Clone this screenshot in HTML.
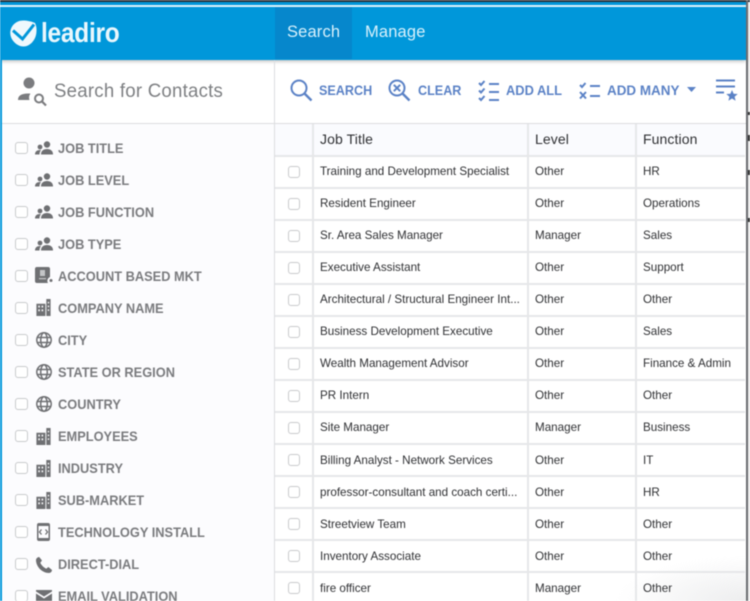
<!DOCTYPE html>
<html><head><meta charset="utf-8">
<style>
html,body{margin:0;padding:0;width:750px;height:601px;overflow:hidden;background:#fff}
body{font-family:"Liberation Sans",sans-serif;position:relative}
#w{position:absolute;left:0;top:0;width:750px;height:601px;overflow:hidden;filter:blur(.4px)}
.a{position:absolute;white-space:nowrap}
.top{left:0;top:0;width:750px;height:2px;background:#2a3038}
.top2{left:0;top:2px;width:746px;height:3px;background:#0097da}
.top3{left:0;top:5px;width:746px;height:2px;background:#dff4fc}
.bar{left:0;top:7px;width:746px;height:53px;background:#0097da;box-shadow:0 1px 4px rgba(0,0,0,.3)}
.tab{left:275px;top:7px;width:77px;height:52px;background:#0687cc}
.nav{top:23px;font-size:16.5px;color:#d8f1fc;letter-spacing:.15px;line-height:19px}
.lb{left:0;top:7px;width:2px;height:594px;background:#0097da}
.rb{left:746px;top:0;width:1.500px;height:601px;background:#6a6c70}
.rw{left:747.500px;top:2px;width:3px;height:599px;background:#ececec}
.sp{left:747px;width:3px;background:#333}
.v{left:274px;top:60px;width:1px;height:541px;background:#dcdde0}
.h{left:2px;top:123px;width:744px;height:1px;background:#dcdde0}
.side{left:2px;top:124px;width:272px;height:477px;background:#fcfcfe}
.st{left:54px;top:80px;font-size:19.500px;color:#7d7f82;letter-spacing:.25px;line-height:23px;transform:scaleX(.955);transform-origin:0 0}
.f{left:58px;margin-top:-.5px;font-size:14px;font-weight:bold;color:#7a7b7e;line-height:16px;height:16px;transform:scaleX(.915);transform-origin:0 0}
.cb{width:10px;height:10px;border:1.500px solid #c9cacc;border-radius:3px;background:#fff}
.cb[style^="left:15px"]{width:10.500px;height:10.500px;margin-top:.5px}
.ic{position:absolute;fill:#6f7073}
.tb{top:82px;font-size:14px;font-weight:bold;color:#5b82c6;line-height:16px;transform-origin:0 0}
.hd{top:131px;font-size:14px;color:#2f3033;line-height:16px;letter-spacing:.1px}
.c{font-size:12px;color:#2f3033;line-height:14px;transform:scaleX(.97);transform-origin:0 0}
.rl{left:275px;width:470px;height:1.500px;background:#e6e7e9}
.cl{top:124px;width:1.500px;height:477px;background:#e6e7e9}
.band{left:275px;top:124px;width:470px;height:31px;background:#fafbfe}
svg{overflow:visible}
.fade{left:275px;top:500px;width:471px;height:101px;background:radial-gradient(ellipse 130px 45px at 100% 100%,rgba(215,216,218,.45),rgba(235,236,238,0))}
</style></head><body>
<svg width="0" height="0" style="position:absolute">
<symbol id="pp" viewBox="0 0 18 14"><circle cx="12" cy="3.500" r="3.200"/><path d="M6 13.500c0-3.800 2.500-5.500 6-5.500s6 1.700 6 5.500z"/><circle cx="5" cy="6" r="2.400"/><path d="M0 13.500c0-3 2-4.500 5-4.500.6 0 1 .1 1 .1-1 1-1.500 2.500-1.500 4.400z"/></symbol>
<symbol id="bd" viewBox="0 0 15 18"><path d="M0 5h9.500v13H0zM10.500 0H15v18h-4.500z"/><path fill="#fcfcfe" d="M2 7h1.600v2H2zM5.500 7h1.600v2H5.500zM2 11h1.600v2H2zM5.500 11h1.600v2H5.500zM12 3h1.500v1.600H12zM12 7h1.500v1.600H12zM12 11h1.500v1.600H12z"/></symbol>
<symbol id="gl" viewBox="0 0 16 16"><g fill="none" stroke="#6f7073" stroke-width="1.500"><circle cx="8" cy="8" r="7.200"/><ellipse cx="8" cy="8" rx="3.300" ry="7.200"/><path d="M1 5.500h14M1 10.500h14"/></g></symbol>
</svg>
<div id="w">
<div class="a top"></div>
<div class="a top2"></div>
<div class="a rw"></div>
<div class="a sp" style="top:112px;height:3px"></div>
<div class="a sp" style="top:135px;height:6px"></div>
<div class="a sp" style="top:170px;height:5px"></div>
<div class="a sp" style="top:218px;height:4px"></div>
<div class="a bar"></div>
<div class="a top3"></div>
<div class="a tab"></div>
<div class="a lb"></div>
<div class="a rb"></div>
<svg class="a" style="left:10px;top:20px" width="28" height="27" viewBox="0 0 28 27"><path fill="#eef8fd" d="M13 .5c4 0 9 1 12 2.500 1.500 3 1.800 6 1.400 9.500C25.800 20 20 26.500 13.500 26.500S.3 20 .3 13 6 .5 13 .5z"/><path fill="none" stroke="#0097da" stroke-width="3" d="M3 10.500l9.500 8.500L24 4.500"/></svg>
<div class="a" style="left:41px;top:17px;font-size:28px;font-weight:bold;color:#e9f7fd;line-height:32px;letter-spacing:-.3px;transform:scaleX(.875);transform-origin:0 0">leadiro</div>
<div class="a nav" style="left:287px">Search</div>
<div class="a nav" style="left:365px">Manage</div>
<div class="a side"></div>
<div class="a h"></div>
<div class="a v"></div>
<svg class="a" style="left:17px;top:77px" width="30" height="30" viewBox="0 0 30 30" fill="#7b7c7f"><circle cx="12" cy="6" r="5.500"/><path d="M1 23c0-4 3-6.500 10-6.500 1 0 2 .1 2.500.2-1.500 1.500-1.800 4-1 6.300z"/><circle cx="22" cy="21.500" r="4" fill="none" stroke="#7b7c7f" stroke-width="2"/><path d="M25 24.500l4 4" stroke="#7b7c7f" stroke-width="2.200"/></svg>
<div class="a st">Search for Contacts</div>

<div class="a cb" style="left:15px;top:141px"></div><svg class="ic" style="left:35px;top:141px" width="18" height="14"><use href="#pp"/></svg><div class="a f" style="top:140px">JOB TITLE</div>
<div class="a cb" style="left:15px;top:173px"></div><svg class="ic" style="left:35px;top:173px" width="18" height="14"><use href="#pp"/></svg><div class="a f" style="top:172px">JOB LEVEL</div>
<div class="a cb" style="left:15px;top:205px"></div><svg class="ic" style="left:35px;top:205px" width="18" height="14"><use href="#pp"/></svg><div class="a f" style="top:204px">JOB FUNCTION</div>
<div class="a cb" style="left:15px;top:237px"></div><svg class="ic" style="left:35px;top:237px" width="18" height="14"><use href="#pp"/></svg><div class="a f" style="top:236px">JOB TYPE</div>
<div class="a cb" style="left:15px;top:269px"></div><svg class="ic" style="left:35px;top:267px" width="18" height="17" viewBox="0 0 18 17"><path d="M2 0h11a2 2 0 0 1 2 2v8a4 4 0 0 0-2 6H2a2 2 0 0 1-2-2V2a2 2 0 0 1 2-2z"/><circle cx="16" cy="13.500" r="1.500"/><path fill="#c4c5c7" d="M5 3h5v6H5zM4 11h7v1.200H4z"/></svg><div class="a f" style="top:268px">ACCOUNT BASED MKT</div>
<div class="a cb" style="left:15px;top:301px"></div><svg class="ic" style="left:36px;top:299px" width="15" height="17"><use href="#bd"/></svg><div class="a f" style="top:300px">COMPANY NAME</div>
<div class="a cb" style="left:15px;top:333px"></div><svg class="ic" style="left:36px;top:332px" width="16" height="16"><use href="#gl"/></svg><div class="a f" style="top:332px">CITY</div>
<div class="a cb" style="left:15px;top:365px"></div><svg class="ic" style="left:36px;top:364px" width="16" height="16"><use href="#gl"/></svg><div class="a f" style="top:364px">STATE OR REGION</div>
<div class="a cb" style="left:15px;top:397px"></div><svg class="ic" style="left:36px;top:396px" width="16" height="16"><use href="#gl"/></svg><div class="a f" style="top:396px">COUNTRY</div>
<div class="a cb" style="left:15px;top:429px"></div><svg class="ic" style="left:36px;top:428px" width="15" height="17"><use href="#bd"/></svg><div class="a f" style="top:428px">EMPLOYEES</div>
<div class="a cb" style="left:15px;top:461px"></div><svg class="ic" style="left:36px;top:460px" width="15" height="17"><use href="#bd"/></svg><div class="a f" style="top:460px">INDUSTRY</div>
<div class="a cb" style="left:15px;top:493px"></div><svg class="ic" style="left:36px;top:492px" width="15" height="17"><use href="#bd"/></svg><div class="a f" style="top:492px">SUB-MARKET</div>
<div class="a cb" style="left:15px;top:525px"></div><svg class="ic" style="left:37px;top:523px" width="13" height="18" viewBox="0 0 13 18"><path d="M2 0h9a2 2 0 0 1 2 2v14a2 2 0 0 1-2 2H2a2 2 0 0 1-2-2V2a2 2 0 0 1 2-2z"/><path fill="#fcfcfe" d="M1.500 3h10v12h-10z"/><path fill="none" stroke="#6f7073" stroke-width="1.300" d="M4.500 6.500L2.500 9l2 2.500M8.500 6.500l2 2.500-2 2.500"/></svg><div class="a f" style="top:524px">TECHNOLOGY INSTALL</div>
<div class="a cb" style="left:15px;top:557px"></div><svg class="ic" style="left:36px;top:557px" width="16" height="16" viewBox="0 0 16 16"><path d="M3.200 0L6 3.500 4.300 5.800c1 2.300 3.200 4.700 5.900 5.900l2.200-1.700L16 13c0 1.500-1.500 3-3 3C6 16 0 9.500 0 3c0-1.500 1.700-3 3.200-3z"/></svg><div class="a f" style="top:556px">DIRECT-DIAL</div>
<div class="a cb" style="left:15px;top:589px"></div><svg class="ic" style="left:36px;top:590px" width="16" height="12" viewBox="0 0 16 12"><path d="M0 0h16v1.500L8 6.500 0 1.500zM0 3.500l8 5 8-5V12H0z"/></svg><div class="a f" style="top:588px">EMAIL VALIDATION</div>

<svg class="a" style="left:290px;top:79px" width="23" height="23" viewBox="0 0 23 23" fill="none" stroke="#5b82c6" stroke-width="2"><circle cx="9" cy="9" r="7.500"/><path d="M14.500 14.500l7 7" stroke-width="2.400"/></svg>
<div class="a tb" style="left:319px;transform:scaleX(.9)">SEARCH</div>
<svg class="a" style="left:388px;top:79px" width="23" height="23" viewBox="0 0 23 23" fill="none" stroke="#5b82c6" stroke-width="2"><circle cx="9" cy="9" r="7.500"/><path d="M14.500 14.500l7 7" stroke-width="2.400"/><path d="M5.800 5.800l6.400 6.400M12.200 5.800l-6.400 6.400"/></svg>
<div class="a tb" style="left:418px;transform:scaleX(.9)">CLEAR</div>
<svg class="a" style="left:478px;top:80px" width="22" height="22" viewBox="0 0 22 22" fill="none" stroke="#5b82c6" stroke-width="2"><path d="M1 3l2 2 3.500-4M1 10.500l2 2 3.500-4M1 18l2 2 3.500-4"/><path d="M11 4h10M11 12h10M11 20h10"/></svg>
<div class="a tb" style="left:506px;transform:scaleX(.92)">ADD ALL</div>
<svg class="a" style="left:579px;top:82px" width="22" height="18" viewBox="0 0 22 18" fill="none" stroke="#5b82c6" stroke-width="2"><path d="M1 3l2 2 3.500-4M1 10l6 6.500M7 10l-6 6.500"/><path d="M11 4h10M11 14h10"/></svg>
<div class="a tb" style="left:607px;transform:scaleX(.96)">ADD MANY</div>
<svg class="a" style="left:687px;top:87px" width="9" height="6"><path fill="#5b82c6" d="M0 0h9L4.500 5z"/></svg>
<svg class="a" style="left:716px;top:79px" width="22" height="23" viewBox="0 0 22 23" fill="none" stroke="#5b82c6" stroke-width="2"><path d="M0 1.500h19M0 7.500h19M0 13.500h8"/><path fill="#5b82c6" stroke="none" d="M16 11l1.600 3.700 4.100.3-3.100 2.700 1 4-3.600-2.200-3.600 2.200 1-4-3.100-2.700 4.100-.3z"/></svg>

<div class="a band"></div>
<div class="a fade"></div>
<div class="a cl" style="left:312px"></div>
<div class="a cl" style="left:527px"></div>
<div class="a cl" style="left:635px"></div>
<div class="a rl" style="top:155px"></div>
<div class="a rl" style="top:187px"></div>
<div class="a rl" style="top:219px"></div>
<div class="a rl" style="top:251px"></div>
<div class="a rl" style="top:283px"></div>
<div class="a rl" style="top:315px"></div>
<div class="a rl" style="top:347px"></div>
<div class="a rl" style="top:379px"></div>
<div class="a rl" style="top:411px"></div>
<div class="a rl" style="top:443px"></div>
<div class="a rl" style="top:475px"></div>
<div class="a rl" style="top:507px"></div>
<div class="a rl" style="top:539px"></div>
<div class="a rl" style="top:571px"></div>
<div class="a hd" style="left:320px">Job Title</div><div class="a hd" style="left:535px">Level</div><div class="a hd" style="left:643px">Function</div>

<div class="a cb" style="left:288px;top:166px"></div><div class="a c" style="left:320px;top:164px">Training and Development Specialist</div><div class="a c" style="left:535px;top:164px">Other</div><div class="a c" style="left:643px;top:164px">HR</div>
<div class="a cb" style="left:288px;top:198px"></div><div class="a c" style="left:320px;top:196px">Resident Engineer</div><div class="a c" style="left:535px;top:196px">Other</div><div class="a c" style="left:643px;top:196px">Operations</div>
<div class="a cb" style="left:288px;top:230px"></div><div class="a c" style="left:320px;top:228px">Sr. Area Sales Manager</div><div class="a c" style="left:535px;top:228px">Manager</div><div class="a c" style="left:643px;top:228px">Sales</div>
<div class="a cb" style="left:288px;top:262px"></div><div class="a c" style="left:320px;top:260px">Executive Assistant</div><div class="a c" style="left:535px;top:260px">Other</div><div class="a c" style="left:643px;top:260px">Support</div>
<div class="a cb" style="left:288px;top:294px"></div><div class="a c" style="left:320px;top:292px">Architectural / Structural Engineer Int...</div><div class="a c" style="left:535px;top:292px">Other</div><div class="a c" style="left:643px;top:292px">Other</div>
<div class="a cb" style="left:288px;top:326px"></div><div class="a c" style="left:320px;top:324px">Business Development Executive</div><div class="a c" style="left:535px;top:324px">Other</div><div class="a c" style="left:643px;top:324px">Sales</div>
<div class="a cb" style="left:288px;top:358px"></div><div class="a c" style="left:320px;top:356px">Wealth Management Advisor</div><div class="a c" style="left:535px;top:356px">Other</div><div class="a c" style="left:643px;top:356px">Finance &amp; Admin</div>
<div class="a cb" style="left:288px;top:390px"></div><div class="a c" style="left:320px;top:388px">PR Intern</div><div class="a c" style="left:535px;top:388px">Other</div><div class="a c" style="left:643px;top:388px">Other</div>
<div class="a cb" style="left:288px;top:422px"></div><div class="a c" style="left:320px;top:420px">Site Manager</div><div class="a c" style="left:535px;top:420px">Manager</div><div class="a c" style="left:643px;top:420px">Business</div>
<div class="a cb" style="left:288px;top:454px"></div><div class="a c" style="left:320px;top:453px">Billing Analyst - Network Services</div><div class="a c" style="left:535px;top:453px">Other</div><div class="a c" style="left:643px;top:453px">IT</div>
<div class="a cb" style="left:288px;top:486px"></div><div class="a c" style="left:320px;top:485px">professor-consultant and coach certi...</div><div class="a c" style="left:535px;top:485px">Other</div><div class="a c" style="left:643px;top:485px">HR</div>
<div class="a cb" style="left:288px;top:518px"></div><div class="a c" style="left:320px;top:517px">Streetview Team</div><div class="a c" style="left:535px;top:517px">Other</div><div class="a c" style="left:643px;top:517px">Other</div>
<div class="a cb" style="left:288px;top:550px"></div><div class="a c" style="left:320px;top:549px">Inventory Associate</div><div class="a c" style="left:535px;top:549px">Other</div><div class="a c" style="left:643px;top:549px">Other</div>
<div class="a cb" style="left:288px;top:582px"></div><div class="a c" style="left:320px;top:581px">fire officer</div><div class="a c" style="left:535px;top:581px">Manager</div><div class="a c" style="left:643px;top:581px">Other</div>
</div>
</body></html>
